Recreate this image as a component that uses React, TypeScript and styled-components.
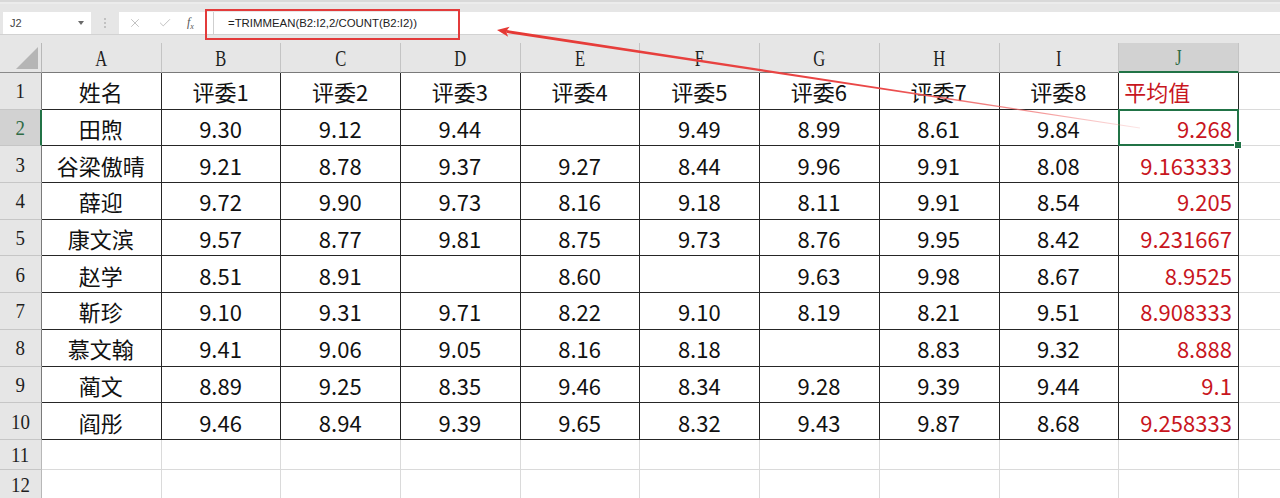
import React from 'react';
import styled, { createGlobalStyle, css } from 'styled-components';
import { X, Check } from 'lucide-react';

const GREEN = '#217346';
const RED = '#c8161e';

const GlobalStyle = createGlobalStyle`
  html, body { margin: 0; padding: 0; background: #ffffff; }
  body {
    width: 1280px; height: 498px; overflow: hidden;
    font-family: "Noto Sans CJK SC", "Noto Sans", sans-serif;
  }
  * { box-sizing: border-box; }
`;

const Page = styled.div`
  position: relative;
  width: 1280px;
  height: 498px;
  overflow: hidden;
  background: #ffffff;
`;

const FormulaBar = styled.div`
  display: flex;
  align-items: flex-start;
  height: 34px;
  padding: 12px 0 0 3px;
  background: linear-gradient(#d9d9d9 0 2px, #ececec 2px 4px, #e6e6e6 4px);
`;

const NameBox = styled.div`
  position: relative;
  display: flex;
  align-items: center;
  width: 88px;
  height: 22px;
  padding-left: 7px;
  background: #ffffff;
  font-family: "Liberation Sans", Arial, sans-serif;
  font-size: 11px;
  color: #444;
`;

const Caret = styled.span`
  margin-left: auto;
  margin-right: 7px;
  width: 0;
  height: 0;
  border-left: 3.5px solid transparent;
  border-right: 3.5px solid transparent;
  border-top: 4px solid #6a6a6a;
`;

const Dots = styled.div`
  display: flex;
  flex-direction: column;
  justify-content: center;
  gap: 2px;
  width: 28px;
  height: 22px;
  align-items: center;
  span {
    width: 2px;
    height: 2px;
    background: #b5b5b5;
    border-radius: 50%;
  }
`;

const ButtonsBox = styled.div`
  display: flex;
  align-items: center;
  width: 94px;
  height: 22px;
  background: #ffffff;
  color: #b4b4b4;
  padding-left: 9px;
  gap: 16px;
`;

const Fx = styled.span`
  font-family: "Liberation Serif", serif;
  font-style: italic;
  font-size: 12px;
  color: #555;
  margin-left: -1px;
  sub { font-size: 8px; }
`;

const FormulaInput = styled.div`
  flex: 1;
  display: flex;
  align-items: center;
  height: 22px;
  padding-left: 14px;
  background: #ffffff;
  border-left: 1px solid #cfcfcf;
  font-family: "Liberation Sans", Arial, sans-serif;
  font-size: 11.4px;
  color: #222;
`;

const Spacer = styled.div`
  height: 9px;
  background: #e6e6e6;
  border-top: 1px solid #d2d2d2;
`;

const Grid = styled.div`
  display: grid;
  grid-template-columns: 42px repeat(10, 119.7px) 1fr;
  grid-template-rows: 30px repeat(10, 36.7px) 30px 30px;
`;

const Corner = styled.div`
  display: flex;
  align-items: flex-end;
  justify-content: flex-end;
  padding: 0 3px 3px 0;
  background: #e6e6e6;
  border-right: 1px solid #b8b8b8;
  border-bottom: 1px solid #8a8a8a;
`;

const Triangle = styled.div`
  width: 22px;
  height: 22px;
  background: #b5b5b5;
  clip-path: polygon(100% 0, 100% 100%, 0 100%);
`;

const ColHeader = styled.div<{ $selected?: boolean; $blank?: boolean }>`
  display: flex;
  align-items: center;
  justify-content: center;
  background: ${(p) => (p.$selected ? '#d2d2d2' : '#e6e6e6')};
  border-right: ${(p) => (p.$blank ? 'none' : '1px solid #c4c4c4')};
  border-bottom: ${(p) => (p.$selected ? `2px solid ${GREEN}` : '1px solid #7a7a7a')};
  color: ${(p) => (p.$selected ? '#2f6b45' : '#1e1e1e')};
  font-family: "Liberation Serif", "DejaVu Serif", serif;
  font-size: 23px;
  padding-top: 2px;
  span { display: inline-block; transform: scaleX(0.72); }
`;

const RowHeader = styled.div<{ $selected?: boolean; $inData?: boolean }>`
  display: flex;
  align-items: center;
  justify-content: center;
  padding-top: 2px;
  background: ${(p) => (p.$selected ? '#d2d2d2' : '#e6e6e6')};
  border-right: ${(p) =>
    p.$selected ? `2px solid ${GREEN}` : p.$inData ? '1px solid #7a7a7a' : '1px solid #b8b8b8'};
  border-bottom: 1px solid #c6c6c6;
  color: ${(p) => (p.$selected ? '#2f6b45' : '#1e1e1e')};
  font-family: "Liberation Serif", "DejaVu Serif", serif;
  font-size: 21px;
  span { display: inline-block; transform: scaleX(0.9); }
`;

type Align = 'center' | 'left' | 'right';

const Cell = styled.div<{
  $align?: Align;
  $red?: boolean;
  $zone: 'data' | 'empty' | 'outside';
  $selected?: boolean;
}>`
  position: relative;
  display: flex;
  align-items: center;
  justify-content: ${(p) =>
    p.$align === 'right' ? 'flex-end' : p.$align === 'left' ? 'flex-start' : 'center'};
  padding: 1px 6px 0 5px;
  font-size: 22px;
  line-height: 1;
  white-space: nowrap;
  color: ${(p) => (p.$red ? RED : '#111111')};
  ${(p) =>
    p.$zone === 'data'
      ? css`
          border-right: 1px solid #262626;
          border-bottom: 1px solid #262626;
        `
      : p.$zone === 'empty'
      ? css`
          border-right: 1px solid #dadada;
          border-bottom: 1px solid #dadada;
        `
      : css`
          border-bottom: 1px solid #dadada;
        `}
  ${(p) =>
    p.$selected &&
    css`
      &::after {
        content: '';
        position: absolute;
        inset: -1px -1px -1px -1px;
        border: 2px solid ${GREEN};
        pointer-events: none;
      }
      &::before {
        content: '';
        position: absolute;
        right: -4px;
        bottom: -4px;
        width: 6px;
        height: 6px;
        background: ${GREEN};
        border: 1px solid #ffffff;
        z-index: 2;
      }
    `}
`;

const Annotation = styled.div`
  position: absolute;
  left: 205px;
  top: 9px;
  width: 255px;
  height: 31px;
  border: 2px solid #e33b3b;
  pointer-events: none;
`;

const ArrowLayer = styled.svg`
  position: absolute;
  left: 0;
  top: 0;
  pointer-events: none;
`;

const cols = ['A', 'B', 'C', 'D', 'E', 'F', 'G', 'H', 'I', 'J'];

const header = ['姓名', '评委1', '评委2', '评委3', '评委4', '评委5', '评委6', '评委7', '评委8', '平均值'];

const data: string[][] = [
  ['田煦', '9.30', '9.12', '9.44', '', '9.49', '8.99', '8.61', '9.84', '9.268'],
  ['谷梁傲晴', '9.21', '8.78', '9.37', '9.27', '8.44', '9.96', '9.91', '8.08', '9.163333'],
  ['薛迎', '9.72', '9.90', '9.73', '8.16', '9.18', '8.11', '9.91', '8.54', '9.205'],
  ['康文滨', '9.57', '8.77', '9.81', '8.75', '9.73', '8.76', '9.95', '8.42', '9.231667'],
  ['赵学', '8.51', '8.91', '', '8.60', '', '9.63', '9.98', '8.67', '8.9525'],
  ['靳珍', '9.10', '9.31', '9.71', '8.22', '9.10', '8.19', '8.21', '9.51', '8.908333'],
  ['慕文翰', '9.41', '9.06', '9.05', '8.16', '8.18', '', '8.83', '9.32', '8.888'],
  ['蔺文', '8.89', '9.25', '8.35', '9.46', '8.34', '9.28', '9.39', '9.44', '9.1'],
  ['阎彤', '9.46', '8.94', '9.39', '9.65', '8.32', '9.43', '9.87', '8.68', '9.258333'],
];

function Arrow() {
  const tip = { x: 497, y: 30 };
  const tail = { x: 1140, y: 128 };
  const dx = tail.x - tip.x;
  const dy = tail.y - tip.y;
  const len = Math.hypot(dx, dy);
  const ux = dx / len;
  const uy = dy / len;
  const nx = -uy;
  const ny = ux;
  const headLen = 12;
  const headHalf = 5;
  const bx = tip.x + ux * headLen;
  const by = tip.y + uy * headLen;
  const w0 = 1.5;
  const w1 = 0.4;
  const p = (x: number, y: number) => `${x.toFixed(2)},${y.toFixed(2)}`;
  const head = [
    p(tip.x, tip.y),
    p(bx + nx * headHalf, by + ny * headHalf),
    p(bx - ux * 2 + nx * w0, by - uy * 2 + ny * w0),
    p(bx - ux * 2 - nx * w0, by - uy * 2 - ny * w0),
    p(bx - nx * headHalf, by - ny * headHalf),
  ].join(' ');
  const shaft = [
    p(bx - ux * 2 + nx * w0, by - uy * 2 + ny * w0),
    p(tail.x + nx * w1, tail.y + ny * w1),
    p(tail.x - nx * w1, tail.y - ny * w1),
    p(bx - ux * 2 - nx * w0, by - uy * 2 - ny * w0),
  ].join(' ');
  return (
    <ArrowLayer width={1280} height={498} viewBox="0 0 1280 498">
      <defs>
        <linearGradient id="arrowGrad" gradientUnits="userSpaceOnUse" x1={tip.x} y1={tip.y} x2={tail.x} y2={tail.y}>
          <stop offset="0" stopColor="#e53935" />
          <stop offset="0.6" stopColor="#ea4848" />
          <stop offset="0.85" stopColor="#f07070" stopOpacity="0.7" />
          <stop offset="1" stopColor="#f49a9a" stopOpacity="0.25" />
        </linearGradient>
      </defs>
      <polygon points={shaft} fill="url(#arrowGrad)" />
      <polygon points={head} fill="#e53935" />
    </ArrowLayer>
  );
}

export default function App() {
  return (
    <Page>
      <GlobalStyle />
      <FormulaBar>
        <NameBox>
          J2
          <Caret />
        </NameBox>
        <Dots>
          <span />
          <span />
          <span />
        </Dots>
        <ButtonsBox>
          <X size={14} strokeWidth={1.4} />
          <Check size={14} strokeWidth={1.4} />
          <Fx>
            f<sub>x</sub>
          </Fx>
        </ButtonsBox>
        <FormulaInput>=TRIMMEAN(B2:I2,2/COUNT(B2:I2))</FormulaInput>
      </FormulaBar>
      <Spacer />
      <Grid>
        <Corner>
          <Triangle />
        </Corner>
        {cols.map((c) => (
          <ColHeader key={c} $selected={c === 'J'}>
            <span>{c}</span>
          </ColHeader>
        ))}
        <ColHeader $blank />

        <RowHeader $inData>
          <span>1</span>
        </RowHeader>
        {header.map((h, i) => (
          <Cell key={h} $zone="data" $align={i === 9 ? 'left' : 'center'} $red={i === 9}>
            {h}
          </Cell>
        ))}
        <Cell $zone="outside" />

        {data.map((row, r) => (
          <React.Fragment key={r}>
            <RowHeader $inData $selected={r === 0}>
              <span>{r + 2}</span>
            </RowHeader>
            {row.map((v, i) => (
              <Cell
                key={i}
                $zone="data"
                $align={i === 9 ? 'right' : 'center'}
                $red={i === 9}
                $selected={r === 0 && i === 9}
              >
                {v}
              </Cell>
            ))}
            <Cell $zone="outside" />
          </React.Fragment>
        ))}

        {[11, 12].map((n) => (
          <React.Fragment key={n}>
            <RowHeader>
              <span>{n}</span>
            </RowHeader>
            {cols.map((c) => (
              <Cell key={c} $zone="empty" />
            ))}
            <Cell $zone="outside" />
          </React.Fragment>
        ))}
      </Grid>
      <Annotation />
      <Arrow />
    </Page>
  );
}
